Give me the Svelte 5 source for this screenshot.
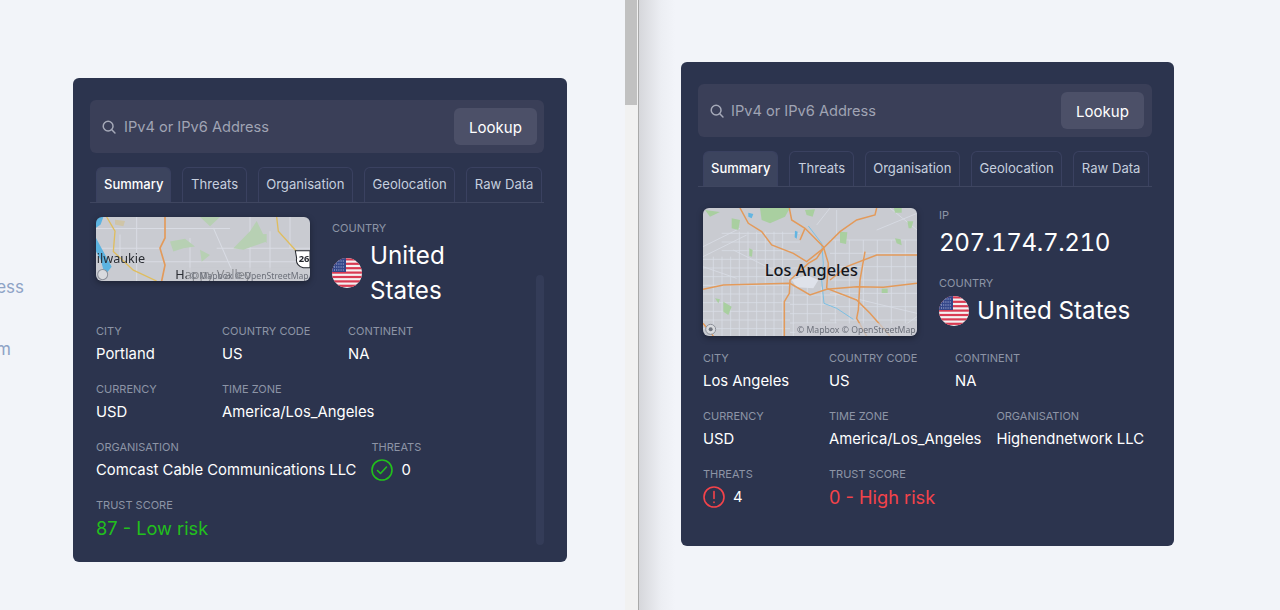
<script>
  const tabs = ['Summary', 'Threats', 'Organisation', 'Geolocation', 'Raw Data'];

  const stripes = [0, 1, 2, 3, 4, 5, 6];

  // white street grid for the LA map, in the map's own coordinates
  const streets = [
    'M39 140L150 85', 'M39 170L170 105', 'M420 24L380 75', 'M560 90L681 40', 'M600 24L681 90',
    'M39 200L140 235', 'M330 250L130 150', 'M430 280L681 340', 'M600 405L681 350', 'M440 30V110'
  ];
  for (let x = 70; x < 300; x += 26) streets.push(`M${x} ${x < 130 ? 170 : 95}V408`);
  for (let x = 310; x < 680; x += 42) streets.push(`M${x} ${x < 420 ? 260 : 120}V408`);
  for (let y = 100; y < 408; y += 26) streets.push(`M${y < 170 ? 95 : 39} ${y}H${y < 240 ? 330 : 300}`);
  for (let y = 120; y < 408; y += 40) streets.push(`M420 ${y}H681`);
  for (let y = 285; y < 408; y += 28) streets.push(`M300 ${y}H440`);

  const laRoads = [
    'M150 24L175 70L215 95L245 135L310 160L350 185L400 145',
    'M298 24L305 60L345 85L400 140L415 190L410 265',
    'M560 24L555 45L500 60L450 95L400 145L380 175L355 190L300 240L298 280L283 305V408',
    'M39 268L100 255L300 250L360 285L410 268L500 260L580 262L681 250',
    'M410 265L500 300L540 340L600 408',
    'M681 165H560L470 200L420 240',
    'M525 155L510 240L505 330L500 355L530 408',
    'M345 85L330 120',
    'M39 370L60 395L70 408'
  ];
  const laGreen = [
    'M210 24H300L285 50L240 70L215 60Z',
    'M45 30L90 36L60 50Z',
    'M125 55L150 60L145 90L125 85Z',
    'M450 95L472 97L468 132L450 128Z',
    'M615 115L632 118L635 136L620 130Z',
    'M178 145L188 150L186 170L178 168Z',
    'M100 305L125 320L115 345L100 335Z',
    'M575 266H593V279H575Z',
    'M612 24H635V38H615Z',
    'M652 64H670L664 85H656Z',
    'M345 30L375 28L368 50L350 45Z',
    'M75 295L90 298L85 310Z'
  ];
</script>

{#snippet flag()}
  <svg class="flag" viewBox="0 0 30 30">
    <defs>
      <clipPath id="round"><circle cx="15" cy="15" r="15" /></clipPath>
    </defs>
    <g clip-path="url(#round)">
      <rect width="30" height="30" fill="#f4f1f1" />
      {#each stripes as i}
        <rect y={i * 4.4 + 0.3} width="30" height="2.2" fill="#d93a52" />
      {/each}
      <rect width="14" height="14" fill="#34478a" />
      <path d="M2 3h10M2 6h10M2 9h10M2 12h10" stroke="#b9c2de" stroke-width="1" stroke-dasharray="1 1.2" />
    </g>
  </svg>
{/snippet}

{#snippet searchAndTabs()}
  <div class="search">
    <svg class="glass" viewBox="0 0 16 16" fill="none" stroke="#a5a9b8" stroke-width="1.7" stroke-linecap="round">
      <circle cx="7" cy="7" r="5.6" />
      <path d="M11.2 11.2l3.6 3.6" />
    </svg>
    <input placeholder="IPv4 or IPv6 Address" />
    <button>Lookup</button>
  </div>
  <div class="tabs">
    {#each tabs as tab, i}
      <div class="tab" class:active={i === 0}>{tab}</div>
    {/each}
  </div>
{/snippet}

{#snippet field(label, value)}
  <div class="field">
    <div class="label">{label}</div>
    <div class="value">{value}</div>
  </div>
{/snippet}

<div class="page">
  <div class="left">
    <div class="cutoff">
      <p>ess</p>
      <p class="second">m</p>
    </div>

    <div class="card first">
      {@render searchAndTabs()}
      <div class="thumb"></div>
      <div class="body scrolled">
        <div class="top">
          <div class="map short">
            <svg viewBox="78 428 642 189" preserveAspectRatio="none">
              <rect x="78" y="428" width="642" height="189" fill="#c9cbd1" />
              <path d="M78 462H280M78 520H270M200 428V617M360 490V617M430 460L500 617M620 520H720M540 428V617M130 560H720M240 462H480M440 520H700M600 470V617M660 428V520M150 480V560" stroke="#d9dce4" stroke-width="3" fill="none" />
              <path d="M300 500L345 492L375 515L340 520L310 530ZM390 525L420 540L395 560ZM490 520L540 470L560 440L590 500L520 525ZM390 428H450L420 455ZM560 480L590 478L590 505Z" fill="#b7d0b3" />
              <path d="M135 436L165 440L160 455L135 450Z" fill="#cfc5a8" />
              <path d="M78 428H100L92 450L78 460ZM78 490L100 530L125 575L105 600L92 555L78 530Z" fill="#5cb3e0" />
              <path d="M110 428L135 470L130 530L190 585L260 617M620 428L625 470L680 530" stroke="#dfbd5e" stroke-width="4" fill="none" />
              <path d="M285 428V490L270 520L285 570L275 617" stroke="#e39a5a" stroke-width="5" fill="none" />
              <text x="80" y="565" class="place">ilwaukie</text>
              <text x="316" y="611" class="place">Happy Valley</text>
              <rect x="350" y="578" width="370" height="39" fill="#c9cbd1" opacity="0.6" />
              <text x="716" y="610" text-anchor="end" class="attrib">© Mapbox © OpenStreetMap</text>
              <path d="M676 528H720V578H700C688 575 676 565 680 550Z" fill="#fff" stroke="#23262d" stroke-width="3" />
              <text x="686" y="561" class="shield">26</text>
              <circle cx="98" cy="598" r="15" fill="#d8dade" stroke="#8b8f98" stroke-width="3" />
            </svg>
          </div>
          <div class="info">
            <div class="block narrow">
              <div class="label">COUNTRY</div>
              <div class="big country">
                {@render flag()}
                <span>United States</span>
              </div>
            </div>
          </div>
        </div>
        <div class="fields">
          {@render field('CITY', 'Portland')}
          {@render field('COUNTRY CODE', 'US')}
          {@render field('CONTINENT', 'NA')}
          {@render field('CURRENCY', 'USD')}
          {@render field('TIME ZONE', 'America/Los_Angeles')}
          {@render field('ORGANISATION', 'Comcast Cable Communications LLC')}
          <div class="field">
            <div class="label">THREATS</div>
            <div class="value threats">
              <svg class="status" viewBox="0 0 22 22" fill="none" stroke="#22c01c" stroke-width="1.6" stroke-linecap="round" stroke-linejoin="round">
                <circle cx="11" cy="11" r="10" />
                <path d="M6.5 11.5l3 3 6-6.5" />
              </svg>
              0
            </div>
          </div>
          <div class="field">
            <div class="label">TRUST SCORE</div>
            <div class="score good">87 - Low risk</div>
          </div>
        </div>
      </div>
    </div>
  </div>

  <div class="scrollbar"><div class="bar"></div></div>

  <div class="right">
    <div class="card second-card">
      {@render searchAndTabs()}
      <div class="body">
        <div class="top">
          <div class="map">
            <svg viewBox="39 24 642 384" preserveAspectRatio="none">
              <rect x="39" y="24" width="642" height="384" fill="#c9cbd1" />
              {#each streets as d}
                <path {d} stroke="#d9dde6" stroke-width="2.4" fill="none" />
              {/each}
              {#each laGreen as d}
                <path {d} fill="#a9cfa0" />
              {/each}
              <path d="M175 38L190 42L185 55L175 50ZM315 92L323 95L320 116L314 112Z" fill="#62b5e2" />
              <path d="M355 78L395 130L400 190L395 240L402 310L440 325L490 358" stroke="#7cc0e4" stroke-width="3" fill="none" />
              <path d="M305 240L350 225L385 240L370 265L320 262Z" fill="#dfe2ea" />
              {#each laRoads as d}
                <path {d} stroke="#e39a5a" stroke-width="4.5" fill="none" />
              {/each}
              <text x="364" y="228" text-anchor="middle" class="city">Los Angeles</text>
              <rect x="314" y="370" width="367" height="38" fill="#c9cbd1" opacity="0.75" />
              <text x="677" y="400" text-anchor="end" class="attrib">© Mapbox © OpenStreetMap</text>
              <circle cx="62" cy="388" r="15" fill="#d8dade" stroke="#8b8f98" stroke-width="3" />
              <circle cx="62" cy="388" r="6" fill="#70747e" />
            </svg>
          </div>
          <div class="info">
            <div class="block">
              <div class="label">IP</div>
              <div class="big ip">207.174.7.210</div>
            </div>
            <div class="block">
              <div class="label">COUNTRY</div>
              <div class="big country">
                {@render flag()}
                <span>United States</span>
              </div>
            </div>
          </div>
        </div>
        <div class="fields">
          {@render field('CITY', 'Los Angeles')}
          {@render field('COUNTRY CODE', 'US')}
          {@render field('CONTINENT', 'NA')}
          {@render field('CURRENCY', 'USD')}
          {@render field('TIME ZONE', 'America/Los_Angeles')}
          {@render field('ORGANISATION', 'Highendnetwork LLC')}
          <div class="field">
            <div class="label">THREATS</div>
            <div class="value threats">
              <svg class="status" viewBox="0 0 22 22" fill="none" stroke="#f4434a" stroke-width="1.6" stroke-linecap="round">
                <circle cx="11" cy="11" r="10" />
                <path d="M11 5.5v7M11 16v.4" />
              </svg>
              4
            </div>
          </div>
          <div class="field">
            <div class="label">TRUST SCORE</div>
            <div class="score bad">0 - High risk</div>
          </div>
        </div>
      </div>
    </div>
  </div>
</div>

<style>
  :global(body) {
    background: #f2f4f9;
    font-family: Inter, 'Noto Sans', sans-serif;
  }

  .page {
    display: flex;
    height: 610px;
    overflow: hidden;
    background: #f2f4f9;
  }

  .left {
    display: flex;
    width: 625px;
    flex: none;
  }

  .cutoff {
    width: 24px;
    padding-right: 49px;
    padding-top: 276px;
    color: #8ea3c6;
    font-size: 17px;
    line-height: 22px;
    flex: none;
  }

  .cutoff p {
    display: flex;
    justify-content: flex-end;
    margin: 0;
  }

  .cutoff .second {
    margin-top: 40px;
    margin-right: 13px;
  }

  .scrollbar {
    width: 13px;
    flex: none;
    background: #f1f1f1;
    border-right: 1px solid #a9a9a9;
  }

  .bar {
    width: 12px;
    height: 105px;
    background: #c1c1c1;
  }

  .right {
    flex: 1;
    padding: 62px 0 0 42px;
    background: linear-gradient(90deg, #d6d7db 0, #eceef3 22px, #f2f4f9 36px);
  }

  .card {
    position: relative;
    box-sizing: border-box;
    width: 493px;
    height: 484px;
    padding: 22px 22px 0 17px;
    background: #2c344e;
    border-radius: 6px;
  }

  .card.first {
    margin-top: 78px;
    width: 494px;
  }

  .search {
    display: flex;
    align-items: center;
    box-sizing: border-box;
    height: 53px;
    width: 454px;
    padding: 0 8px 0 12px;
    background: #3a3f58;
    border-radius: 6px;
  }

  .first .search {
    padding-right: 7px;
  }

  .glass {
    width: 14px;
    height: 14px;
    flex: none;
  }

  input {
    flex: 1;
    min-width: 0;
    margin-left: 7px;
    padding: 1px 0 0;
    border: 0;
    outline: 0;
    background: transparent;
    font: 14.6px Inter, 'Noto Sans', sans-serif;
    color: #fff;
  }

  .first input {
    margin-left: 8px;
  }

  input::placeholder {
    color: #a0a4b4;
    opacity: 1;
  }

  button {
    width: 83px;
    height: 37px;
    padding: 2px 0 0;
    border: 0;
    border-radius: 6px;
    background: #4c5068;
    color: #fff;
    font: 15px Inter, 'Noto Sans', sans-serif;
  }

  .tabs {
    display: flex;
    justify-content: space-between;
    box-sizing: border-box;
    width: 454px;
    height: 36px;
    margin-top: 14px;
    padding: 0 3px 0 5px;
    border-bottom: 1px solid #3f4660;
  }

  .first .tabs {
    padding-left: 6px;
    padding-right: 2px;
  }

  .tab {
    display: flex;
    align-items: center;
    padding: 0 7.5px 2px;
    border: 1px solid #3a4160;
    border-bottom: 0;
    border-radius: 6px 6px 0 0;
    color: #c6cfdf;
    font-size: 13.1px;
    white-space: nowrap;
  }

  .tab.active {
    padding: 0 7px 2px;
    background: #3c445e;
    color: #fff;
    font-size: 13px;
    font-weight: 500;
  }

  .body {
    padding: 21px 0 0 5px;
  }

  .body.scrolled {
    padding: 14px 0 0 6px;
  }

  .top {
    display: flex;
    align-items: flex-start;
    gap: 22px;
  }

  .map {
    width: 214px;
    height: 128px;
    flex: none;
    border-radius: 6px;
    overflow: hidden;
    box-shadow: 0 2px 6px rgba(0, 0, 0, 0.35);
  }

  .map.short {
    height: 64px;
  }

  .map svg {
    display: block;
    width: 100%;
    height: 100%;
    filter: blur(0.35px);
  }

  .place {
    font: 38px 'Noto Sans', sans-serif;
    fill: #2a2d33;
  }

  .city {
    font: 500 49px 'Noto Sans', sans-serif;
    fill: #14161c;
  }

  .attrib {
    font: 26px 'Noto Sans', sans-serif;
    fill: #6c707a;
  }

  .shield {
    font: 700 28px 'Noto Sans', sans-serif;
    fill: #23262d;
  }

  .block + .block {
    margin-top: 16px;
  }

  .first .top {
    min-height: 92px;
  }

  .first .info {
    margin-top: 4px;
  }

  .block.narrow {
    width: 150px;
  }

  .label {
    height: 14px;
    color: #8d94a6;
    font-size: 11px;
    line-height: 14px;
    white-space: nowrap;
  }

  .big {
    margin-top: 3px;
    color: #fff;
    font-size: 24.2px;
    line-height: 35px;
  }

  .ip {
    letter-spacing: -0.4px;
    font-variant-numeric: tabular-nums;
  }

  .country {
    display: flex;
    align-items: center;
    gap: 8px;
  }

  .flag {
    width: 30px;
    height: 30px;
    flex: none;
  }

  .fields {
    display: flex;
    flex-wrap: wrap;
    gap: 17px 15px;
    width: 449px;
    margin-top: 15px;
  }

  .first .fields {
    width: 440px;
  }

  .field {
    min-width: 111px;
  }

  .value {
    margin-top: 5px;
    color: #fff;
    font-size: 14.85px;
    line-height: 22px;
    white-space: nowrap;
  }

  .threats {
    display: flex;
    align-items: center;
    gap: 8px;
  }

  .status {
    width: 22px;
    height: 22px;
  }

  .score {
    margin-top: 5px;
    font-size: 18.2px;
    line-height: 22px;
    white-space: nowrap;
  }

  .good {
    color: #22c01c;
  }

  .bad {
    color: #f4434a;
  }

  .thumb {
    position: absolute;
    left: 463px;
    top: 197px;
    width: 8px;
    height: 270px;
    border-radius: 4px;
    background: #343c58;
  }
</style>
